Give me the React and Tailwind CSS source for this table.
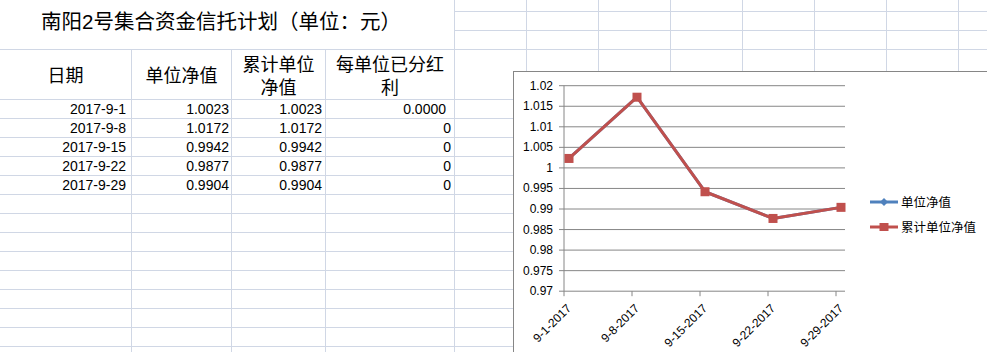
import React from 'react';

const line = 'border-r border-b border-[#d0d7e5]';

const rows = [
  ['2017-9-1', '1.0023', '1.0023', '0.0000'],
  ['2017-9-8', '1.0172', '1.0172', '0'],
  ['2017-9-15', '0.9942', '0.9942', '0'],
  ['2017-9-22', '0.9877', '0.9877', '0'],
  ['2017-9-29', '0.9904', '0.9904', '0'],
];

const values = [1.0023, 1.0172, 0.9942, 0.9877, 0.9904];
const dates = ['9-1-2017', '9-8-2017', '9-15-2017', '9-22-2017', '9-29-2017'];
const yLabels = ['1.02', '1.015', '1.01', '1.005', '1', '0.995', '0.99', '0.985', '0.98', '0.975', '0.97'];

const TOP = 85.7;
const BOTTOM = 291.2;
const STEP = (BOTTOM - TOP) / 10;
const toY = (v) => BOTTOM - ((v - 0.97) / 0.05) * (BOTTOM - TOP);
const pointX = (i) => 569 + i * 68;
const tickX = (i) => 564 + i * 68;

const EmptyCells = ({ count }) =>
  Array.from({ length: count }).map((_, i) => <div key={i} className={line} />);

const Chart = () => {
  const pts = values.map((v, i) => `${pointX(i)},${toY(v)}`).join(' ');
  return (
    <div className="absolute left-[513px] top-[71px] w-[500px] h-[300px] bg-white border-l border-t border-[#868686] flex">
      <svg
        width="346"
        height="280"
        viewBox="514 72 346 280"
        className="shrink-0 font-['Liberation_Sans',sans-serif] text-[12px]"
      >
        {yLabels.map((label, k) => {
          const y = TOP + k * STEP;
          return (
            <g key={label}>
              <line x1="559" x2="845" y1={y} y2={y} stroke="#868686" strokeWidth="1" />
              <text x="553" y={y + 4} textAnchor="end" fill="#000">
                {label}
              </text>
            </g>
          );
        })}
        <line x1="564" x2="564" y1={TOP} y2={BOTTOM} stroke="#868686" strokeWidth="1" />
        {dates.map((d, i) => (
          <g key={d}>
            <line x1={tickX(i)} x2={tickX(i)} y1={BOTTOM} y2={BOTTOM + 5} stroke="#868686" strokeWidth="1" />
            <text
              x={tickX(i) + 8}
              y="309"
              textAnchor="end"
              fill="#000"
              transform={`rotate(-45 ${tickX(i) + 8} 309)`}
            >
              {d}
            </text>
          </g>
        ))}
        <polyline points={pts} fill="none" stroke="#4f81bd" strokeWidth="3" strokeLinejoin="round" />
        <polyline points={pts} fill="none" stroke="#c0504d" strokeWidth="3" strokeLinejoin="round" />
        {values.map((v, i) => (
          <rect key={i} x={pointX(i) - 4.5} y={toY(v) - 4.5} width="9" height="9" fill="#c0504d" />
        ))}
      </svg>
      <div className="ml-[10px] mt-[121px] flex flex-col gap-[7px] font-['Noto_Sans_CJK_SC',sans-serif] text-[12.5px] leading-[18px] text-black">
        <div className="flex items-center">
          <svg width="29" height="12" className="shrink-0">
            <line x1="0" x2="28" y1="6" y2="6" stroke="#4f81bd" strokeWidth="3" />
            <polygon points="14,2 18,6 14,10 10,6" fill="#4f81bd" />
          </svg>
          <span className="ml-[2px]">单位净值</span>
        </div>
        <div className="flex items-center">
          <svg width="29" height="12" className="shrink-0">
            <line x1="0" x2="28" y1="6" y2="6" stroke="#c0504d" strokeWidth="3" />
            <rect x="9.5" y="2" width="9" height="8" fill="#c0504d" />
          </svg>
          <span className="ml-[2px]">累计单位净值</span>
        </div>
      </div>
    </div>
  );
};

export default function App() {
  return (
    <div className="relative w-[987px] h-[352px] overflow-hidden bg-white">
      <div className="grid grid-cols-[132px_100px_94px_129px_repeat(8,72px)] grid-rows-[12px_19px_19px_50px_repeat(14,19px)] text-black">
        <div className={`${line} col-span-4 row-span-3 flex items-center justify-center pb-1 pr-[12px] font-['Liberation_Sans','Noto_Sans_CJK_SC',sans-serif] text-[20.5px]`}>
          南阳2号集合资金信托计划（单位：元）
        </div>
        <EmptyCells count={24} />

        {['日期', '单位净值', '累计单位净值', '每单位已分红利'].map((h) => (
          <div
            key={h}
            className={`${line} flex items-center justify-center text-center px-[3px] font-['Noto_Sans_CJK_SC',sans-serif] text-[18px] leading-[23px]`}
          >
            {h}
          </div>
        ))}
        <EmptyCells count={8} />

        {rows.map((r, ri) => (
          <React.Fragment key={ri}>
            <div className={`${line} flex items-center justify-end pr-[5px] font-['Liberation_Sans',sans-serif] text-[14px]`}>{r[0]}</div>
            <div className={`${line} flex items-center justify-end pr-[2px] font-['Liberation_Sans',sans-serif] text-[14px]`}>{r[1]}</div>
            <div className={`${line} flex items-center justify-end pr-[3px] font-['Liberation_Sans',sans-serif] text-[14px]`}>{r[2]}</div>
            <div className={`${line} flex items-center justify-end ${ri === 0 ? 'pr-[8px]' : 'pr-[3px]'} font-['Liberation_Sans',sans-serif] text-[14px]`}>{r[3]}</div>
            <EmptyCells count={8} />
          </React.Fragment>
        ))}

        <EmptyCells count={12 * 9} />
      </div>
      <Chart />
    </div>
  );
}
